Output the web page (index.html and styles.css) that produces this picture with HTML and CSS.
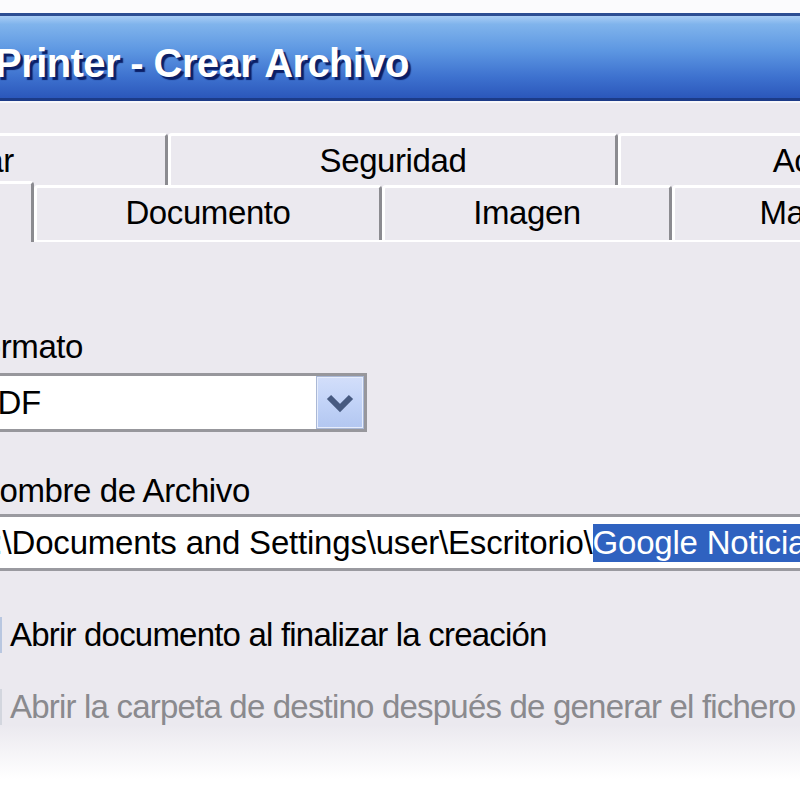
FILE: index.html
```html
<!DOCTYPE html>
<html lang="es">
<head>
<meta charset="utf-8">
<title>Printer - Crear Archivo</title>
<link rel="stylesheet" href="styles.css">
</head>
<body>
<div class="screen">
  <div class="top"></div>
  <div class="window">
    <div class="titlebar"><span class="title">Bullzip PDF Printer - Crear Archivo</span></div>
    <div class="body">
      <div class="tabrow row1">
        <div class="tab w-comb">Combinar</div>
        <div class="tab w-seg">Seguridad</div>
        <div class="tab w-acc">Acciones</div>
      </div>
      <div class="tabrow row2">
        <div class="tab selected w-gen">General</div>
        <div class="tab w-doc">Documento</div>
        <div class="tab w-img">Imagen</div>
        <div class="tab w-mar">Marca de agua</div>
      </div>
      <div class="panel">
        <div class="label fmt">Formato</div>
        <div class="combo">
          <span class="combo-text">PDF</span>
          <span class="combo-btn">
            <svg width="44" height="49" viewBox="0 0 44 49"><polyline points="11,19 22,30 33,19" fill="none" stroke="#475a80" stroke-width="6" stroke-linejoin="miter"/></svg>
          </span>
        </div>
        <div class="label name">Nombre de Archivo</div>
        <div class="textbox"><span class="path">C:\Documents and Settings\user\Escritorio\</span><span class="sel">Google Noticias.pdf</span></div>
        <div class="check"><span class="box"></span><span class="ctext">Abrir documento al finalizar la creación</span></div>
        <div class="check disabled"><span class="box"></span><span class="ctext">Abrir la carpeta de destino después de generar el fichero</span></div>
      </div>
    </div>
  </div>
</div>
</body>
</html>
```
FILE: styles.css
```css
body {
  margin: 0;
  background: #fff;
  font-family: "Liberation Sans", Arial, sans-serif;
  overflow: hidden;
}
.screen {
  width: 800px;
  height: 800px;
  display: flex;
  flex-direction: column;
  overflow: hidden;
}
.top {
  height: 13px;
  background: #fbfbfd;
  flex: none;
}
.window {
  flex: 1;
  display: flex;
  flex-direction: column;
}
.titlebar {
  flex: none;
  border-top: 3px solid #2d4e93;
  border-bottom: 3px solid #1c3b88;
  background: linear-gradient(to bottom, #a9cdf5 0, #80b4ec 10%, #5d97e2 42%, #3e72cf 74%, #2b57bb 100%);
  padding: 26px 0 13px;
  white-space: nowrap;
}
.title {
  display: block;
  font-weight: bold;
  font-size: 40px;
  line-height: 43px;
  color: #fff;
  text-shadow: 3px 3px 1px #0b1f66;
  margin-left: -231px;
  letter-spacing: -0.6px;
}
.body {
  flex: 1;
  border-top: 2px solid #f7f7fa;
  padding-top: 30px;
  background: linear-gradient(to bottom, #ebe9ef 0, #ebe9ef 622px, #ffffff 676px);
  overflow: hidden;
}
.tabrow {
  display: flex;
  white-space: nowrap;
}
.tab {
  flex: none;
  box-sizing: border-box;
  border-top: 3px solid #fff;
  border-left: 3px solid #fff;
  border-right: 3px solid #8b8b90;
  border-radius: 4px 4px 0 0;
  display: flex;
  align-items: center;
  justify-content: center;
  font-size: 33px;
  letter-spacing: -0.4px;
  color: #000;
  background: #ebe9ef;
}
.row1 {
  height: 52px;
  margin-left: -280px;
}
.row1 .tab { height: 52px; }
.w-comb { width: 448px; }
.w-seg { width: 450px; }
.w-acc { width: 440px; }
.row2 {
  height: 55px;
  margin-left: -266px;
  align-items: flex-end;
}
.row2 .tab {
  height: 55px;
  padding-bottom: 2px;
}
.row2 .tab.selected {
  height: 61px;
  margin-bottom: -2px;
  position: relative;
  z-index: 1;
}
.w-gen { width: 300px; }
.w-doc { width: 348px; }
.w-img { width: 290px; }
.w-mar { width: 390px; }

.panel {
  border-top: 2px solid #fff;
  padding-top: 86px;
  font-size: 33px;
  letter-spacing: -0.4px;
  color: #000;
}
.label {
  line-height: 38px;
  white-space: nowrap;
}
.label.fmt { margin-left: -37px; }
.label.name { margin-left: -24px; margin-top: 40px; }

.combo {
  margin-top: 7px;
  margin-left: -32px;
  width: 399px;
  height: 59px;
  box-sizing: border-box;
  border: 3px solid #97979c;
  background: #fff;
  display: flex;
  align-items: center;
  justify-content: space-between;
}
.combo-text {
  padding-left: 5px;
  line-height: 38px;
}
.combo-btn {
  width: 48px;
  height: 53px;
  box-sizing: border-box;
  border: 2px solid #e6edfc;
  outline: 1px solid #aab8d6;
  outline-offset: -1px;
  background: linear-gradient(to bottom, #d2defa 0, #c2d3f7 50%, #b3c7f1 100%);
  display: flex;
  align-items: center;
  justify-content: center;
}
.combo-btn svg { display: block; }

.textbox {
  margin-top: 4px;
  margin-left: -36px;
  width: 900px;
  height: 57px;
  box-sizing: border-box;
  border-top: 3px solid #9a9aa0;
  border-bottom: 3px solid #9a9aa0;
  border-left: 3px solid #9a9aa0;
  background: #fff;
  padding: 7px 0 0 3px;
  white-space: nowrap;
  line-height: 38px;
  letter-spacing: -0.2px;
}
.sel {
  display: inline-block;
  background: #2f62c0;
  color: #fff;
  line-height: 38px;
}

.check {
  display: flex;
  align-items: center;
  gap: 8px;
  line-height: 38px;
  white-space: nowrap;
  margin-top: 45px;
  letter-spacing: -0.8px;
}
.check + .check { margin-top: 34px; }
.box {
  flex: none;
  width: 45px;
  height: 36px;
  margin-left: -43px;
  box-sizing: border-box;
  border-right: 2px solid #b9c7e0;
}
.check.disabled .ctext { color: #8a8a8e; }
.check.disabled .box { border-right-color: #d3d6de; }
```
